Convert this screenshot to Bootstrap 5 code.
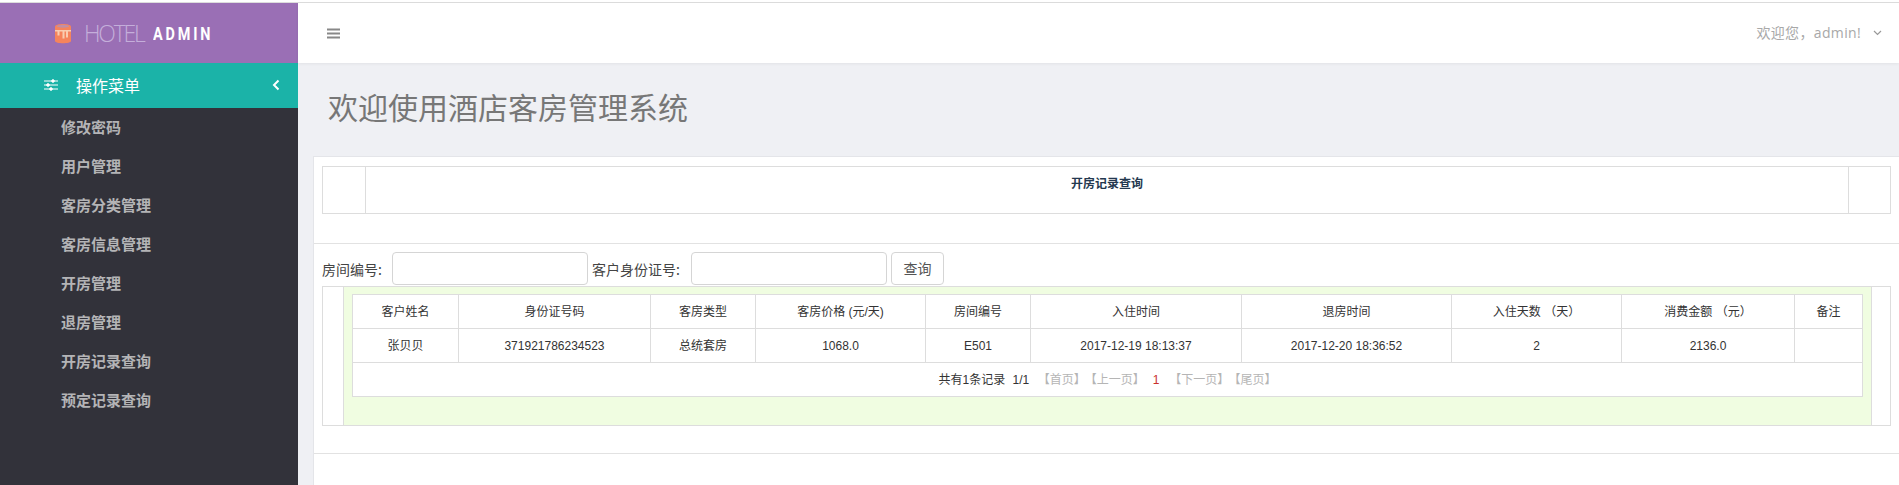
<!DOCTYPE html>
<html lang="zh-CN">
<head>
<meta charset="utf-8">
<title>酒店客房管理系统</title>
<link href="https://cdn.jsdelivr.net/npm/bootstrap@5.3.0/dist/css/bootstrap.min.css" rel="stylesheet">
<style>
html,body{height:485px;overflow:hidden}
body{font-family:"Liberation Sans","Noto Sans CJK SC",sans-serif;font-size:12px;color:#333;background:#fff;padding-top:2px}
.shell{height:483px;border-top:1px solid #ddd}
.side{width:298px;flex:none;background:#32323a}
.brand{height:60px;background:#9a6fb5;padding-left:54px}
.brand svg{margin-right:12px}
.brand-a{font:300 23px "Open Sans",sans-serif;letter-spacing:-2.2px;color:#c4aeda;margin-right:9px}
.brand-b{font:700 18px "Roboto",sans-serif;letter-spacing:3.6px;color:#fff;transform:scaleX(.8);transform-origin:left}
.menu-head{height:45px;background:#1bb3a8;color:#fff;padding:0 18px 2px 44px;font:16px "Noto Sans CJK SC",sans-serif}
.menu-head svg.sl{margin-right:18px}
.side-list{padding:0 0 0 61px;margin:0;list-style:none}
.side-list a{display:block;height:39px;font:700 15px/37px "Noto Sans CJK SC",sans-serif;color:#b4b4b6;text-decoration:none}
.main-col{min-width:0;background:#eff0f4}
.top-bar{height:60px;background:#fff;padding:0 17px 0 29px;box-shadow:0 1px 3px rgba(0,0,0,.06)}
.who{font:14px "Open Sans","Noto Sans CJK SC",sans-serif;color:#a8a8a8;margin:0 12px 3px 0;letter-spacing:.35px}
.page-h{height:93px;padding:25px 0 0 30px}
.page-h h1{font:400 30px/1.2 "Noto Sans CJK SC",sans-serif;color:#777;margin:0}
.sheet{margin-left:15px;background:#fff;border:1px solid #e4e5e9;border-right:0;border-bottom:0;height:340px;padding:9px 8px 0 8px}
.frame{border:1px solid #ddd;height:48px}
.frame-l{width:42px;flex:none}
.frame-r{width:41px;flex:none}
.frame-mid{border:1px solid #ddd;border-width:0 1px;font:700 12px/1 "Noto Sans CJK SC",sans-serif;color:#24384f;padding-top:10px}
.rule{margin:29px -8px 0;border-top:1px solid #e2e2e2;height:9px}
.search{height:33px;font:14px "Noto Sans CJK SC",sans-serif;color:#444}
.search .lab-a{width:70px}
.search .lab-b{width:99px;margin-left:4px}
.search .form-control{width:196px;height:33px;border-radius:4px;padding:0;border-color:#d5d5d5}
.search .btn{height:33px;width:53px;padding:0;font-size:14px;color:#555;border:1px solid #d5d5d5;border-radius:4px;margin-left:4px;background:#fff}
.grid-box{height:140px;margin-top:1px;border:1px solid #ddd}
.grid-l{width:21px;flex:none;border-right:1px solid #ddd}
.grid-r{width:21px;flex:none;border-left:1px solid #ddd}
.grid-mid{background:#f0fde1;padding:7px 8px 0}
.rec{table-layout:fixed;width:1510px;margin:0;border-color:#ddd;font-size:12px}
.rec th,.rec td{height:34px;padding:0;text-align:center;vertical-align:middle;font-weight:400;color:#333;background:#fff;border-color:#ddd;box-shadow:none}
.rec .w1{width:106px}.rec .w2{width:192px}.rec .w3{width:105px}.rec .w4{width:170px}.rec .w5{width:105px}
.rec .w6{width:211px}.rec .w7{width:210px}.rec .w8{width:170px}.rec .w9{width:173px}.rec .w10{width:68px}
.pg-off{color:#b5b5b5;margin-left:5px}
.pg-cur{color:#c9302c;margin:0 5px 0 8px}
.sum{margin-right:4px}
.low{height:28px;border-bottom:1px solid #e2e2e2;margin:0 -8px}
</style>
</head>
<body>
<div class="shell d-flex">
  <aside class="side">
    <div class="brand d-flex align-items-center">
      <svg width="18" height="22" viewBox="0 0 18 22" aria-hidden="true">
        <path d="M1 4.500C1 1 17 1 17 4.500V19c0 3-16 3-16 0z" fill="#f5845c"/>
        <ellipse cx="9" cy="4.200" rx="6.200" ry="1.500" fill="#c08fa6"/>
        <path d="M1 8h16v1.500h-3v6h-2v-6h-1.500v7h-2v-7h-3v4H3.500v-4H1z" fill="#f9cdb0"/>
      </svg>
      <span class="brand-a">HOTEL</span><span class="brand-b">ADMIN</span>
    </div>
    <div class="menu-head d-flex align-items-center">
      <svg class="sl" width="14" height="12" viewBox="0 0 14 12" aria-hidden="true" fill="none" stroke="#fff">
        <path d="M0 2h14M0 6h14M0 10h14"/>
        <circle cx="9" cy="2" r="1.300" fill="#fff"/><circle cx="4" cy="6" r="1.300" fill="#fff"/><circle cx="7" cy="10" r="1.300" fill="#fff"/>
      </svg>
      <span class="flex-grow-1">操作菜单</span>
      <svg width="8" height="12" viewBox="0 0 8 12" aria-hidden="true" fill="none" stroke="#fff" stroke-width="2"><path d="M6.500 1.500 2 6l4.500 4.500"/></svg>
    </div>
    <ul class="side-list">
      <li><a href="#">修改密码</a></li>
      <li><a href="#">用户管理</a></li>
      <li><a href="#">客房分类管理</a></li>
      <li><a href="#">客房信息管理</a></li>
      <li><a href="#">开房管理</a></li>
      <li><a href="#">退房管理</a></li>
      <li><a href="#">开房记录查询</a></li>
      <li><a href="#">预定记录查询</a></li>
    </ul>
  </aside>
  <main class="main-col flex-grow-1">
    <div class="top-bar d-flex align-items-center justify-content-between">
      <svg width="13" height="11" viewBox="0 0 13 11" aria-hidden="true" fill="none" stroke="#888" stroke-width="2"><path d="M0 1.500h13M0 5.500h13M0 9.500h13"/></svg>
      <div class="d-flex align-items-center">
        <span class="who">欢迎您，admin!</span>
        <svg width="9" height="6" viewBox="0 0 9 6" aria-hidden="true" fill="none" stroke="#999" stroke-width="1.200"><path d="M1 1l3.500 3.500L8 1"/></svg>
      </div>
    </div>
    <div class="page-h"><h1>欢迎使用酒店客房管理系统</h1></div>
    <section class="sheet">
      <div class="frame d-flex">
        <div class="frame-l"></div>
        <div class="frame-mid flex-grow-1 text-center">开房记录查询</div>
        <div class="frame-r"></div>
      </div>
      <div class="rule"></div>
      <form class="search d-flex align-items-center">
        <label class="lab-a">房间编号:</label><input class="form-control" type="text">
        <label class="lab-b">客户身份证号:</label><input class="form-control" type="text">
        <button class="btn" type="button">查询</button>
      </form>
      <div class="grid-box d-flex">
        <div class="grid-l"></div>
        <div class="grid-mid flex-grow-1">
          <table class="table table-bordered rec">
            <colgroup><col class="w1"><col class="w2"><col class="w3"><col class="w4"><col class="w5"><col class="w6"><col class="w7"><col class="w8"><col class="w9"><col class="w10"></colgroup>
            <thead><tr><th>客户姓名</th><th>身份证号码</th><th>客房类型</th><th>客房价格 (元/天)</th><th>房间编号</th><th>入住时间</th><th>退房时间</th><th>入住天数 （天）</th><th>消费金额 （元）</th><th>备注</th></tr></thead>
            <tbody>
              <tr><td>张贝贝</td><td>371921786234523</td><td>总统套房</td><td>1068.0</td><td>E501</td><td>2017-12-19 18:13:37</td><td>2017-12-20 18:36:52</td><td>2</td><td>2136.0</td><td></td></tr>
              <tr><td colspan="10"><span class="sum">共有1条记录</span> 1/1 <span class="pg-off">【首页】</span><span class="pg-off">【上一页】</span><span class="pg-cur">1</span><span class="pg-off">【下一页】</span><span class="pg-off">【尾页】</span></td></tr>
            </tbody>
          </table>
        </div>
        <div class="grid-r"></div>
      </div>
      <div class="low"></div>
    </section>
  </main>
</div>
<script src="https://cdn.jsdelivr.net/npm/bootstrap@5.3.0/dist/js/bootstrap.bundle.min.js"></script>
</body>
</html>
